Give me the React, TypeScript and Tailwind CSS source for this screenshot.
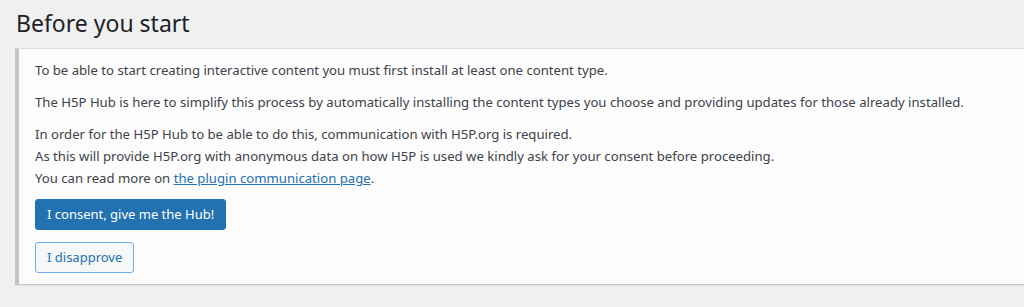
export default function App() {
  const font = { fontFamily: '"Noto Sans", "Open Sans", sans-serif' };
  return (
    <div className="min-h-[307px] w-full bg-[#f0f0f1] overflow-hidden" style={font}>
      <div className="pl-4 pt-[6px]">
        <h1 className="text-[23px] leading-[34px] text-[#1d2327] font-normal">Before you start</h1>
      </div>
      <div className="ml-[15px] mt-[8px] border-l-4 border-l-[#c3c4c7] border-t border-t-[#dcdcde] border-b border-b-[#c3c4c7] bg-[#fcfcfc] pl-4 pt-[10px] pb-[11px] shadow-[0_1px_1px_rgba(0,0,0,0.04)]">
        <div className="text-[13.15px] leading-[22px] text-[#3c434a]">
          <p className="mb-[10px]">To be able to start creating interactive content you must first install at least one content type.</p>
          <p className="mb-[10px]">The H5P Hub is here to simplify this process by automatically installing the content types you choose and providing updates for those already installed.</p>
          <p className="mb-[10px]">
            In order for the H5P Hub to be able to do this, communication with H5P.org is required.<br />
            As this will provide H5P.org with anonymous data on how H5P is used we kindly ask for your consent before proceeding.<br />
            You can read more on <a className="text-[#2271b1] underline">the plugin communication page</a>.
          </p>
        </div>
        <div className="flex flex-col items-start gap-[12px]">
          <button className="h-[31px] px-[11px] rounded-[3px] bg-[#2271b1] text-white text-[13px] border border-[#2271b1]">I consent, give me the Hub!</button>
          <button className="h-[31px] px-[11px] rounded-[3px] bg-[#f6f7f7] text-[#2271b1] text-[13px] border border-[#72aee6]">I disapprove</button>
        </div>
      </div>
    </div>
  );
}
